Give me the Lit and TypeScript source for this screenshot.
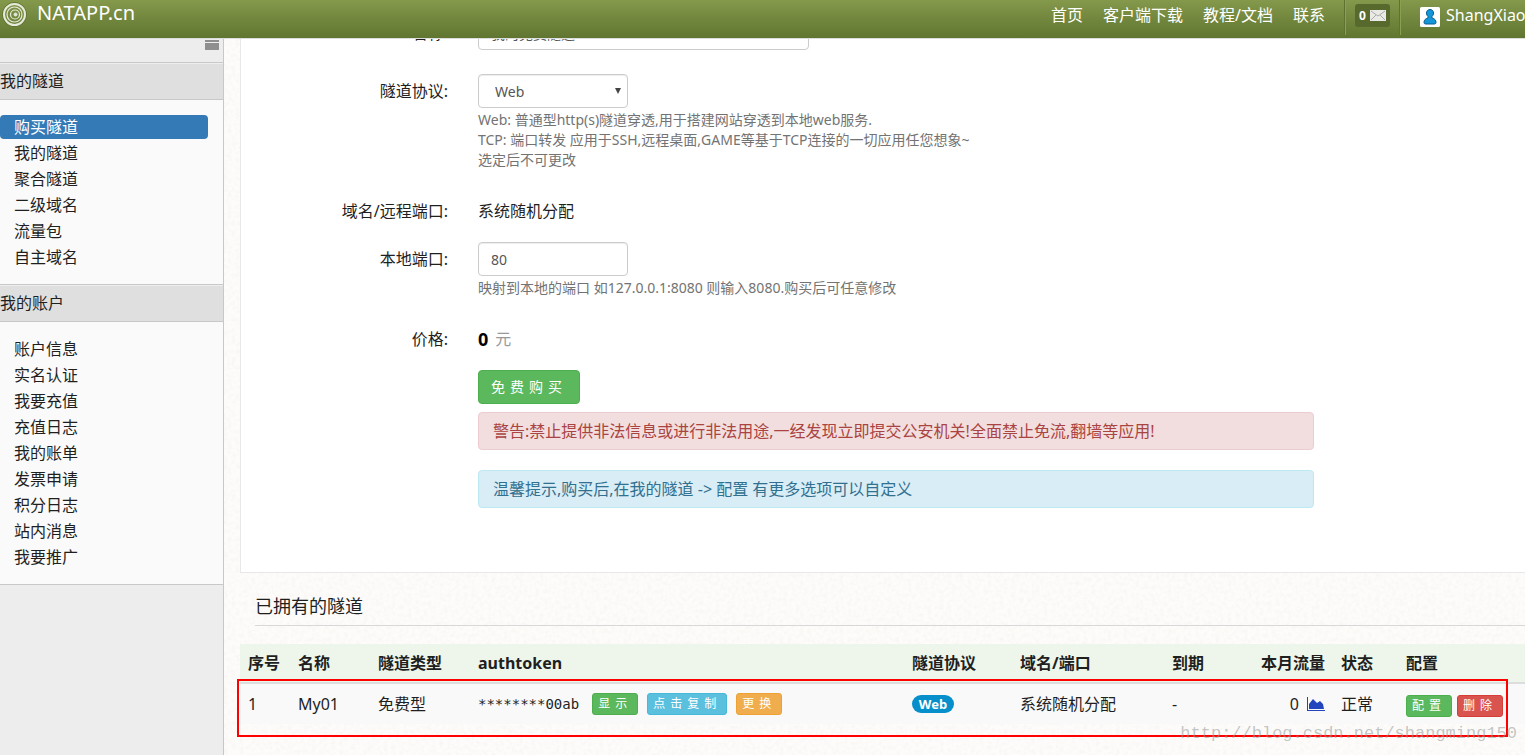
import { LitElement, html, css } from "lit";
import { customElement, state } from "lit/decorators.js";

@customElement("app-root")
export class AppRoot extends LitElement {
  @state() private current = "购买隧道";
  private groups = [
    { title: "我的隧道", items: ["购买隧道", "我的隧道", "聚合隧道", "二级域名", "流量包", "自主域名"] },
    {
      title: "我的账户",
      items: ["账户信息", "实名认证", "我要充值", "充值日志", "我的账单", "发票申请", "积分日志", "站内消息", "我要推广"],
    },
  ];

  static styles = css`
    :host {
      display: flex;
      flex-direction: column;
      height: 100vh;
      overflow: hidden;
      font: 16px/24px "Noto Sans", "Noto Sans CJK SC", sans-serif;
      color: #1f1f1f;
    }
    * { box-sizing: border-box; }
    a { color: inherit; text-decoration: none; }
    ul { list-style: none; margin: 0; padding: 0; }
    input, select, button { font-family: inherit; }

    .topbar {
      flex: none;
      display: flex;
      height: 38px;
      background: linear-gradient(#84994b, #607530);
      color: #fff;
      box-shadow: 0 1px 0 #dedede;
      position: relative;
      z-index: 2;
    }
    .brand { display: flex; gap: 8px; padding: 1px 0 0 1px; font-size: 20px; }
    .brand svg { width: 28px; height: 28px; }
    .nav { display: flex; gap: 20px; margin-left: auto; padding: 3px 20px 0 0; white-space: nowrap; }
    .cell { height: 35px; border-left: 1px solid #8ba04f; box-shadow: -1px 0 0 #5f7231; }
    .mail { width: 55px; padding: 4px 9px; }
    .mail-count {
      display: flex;
      align-items: center;
      gap: 4px;
      width: 35px;
      height: 23px;
      padding: 0 4px;
      border: 0;
      border-radius: 3px;
      background: #58692d;
      color: #fff;
      font-size: 12px;
      font-weight: 700;
    }
    .mail-count svg { flex: none; width: 16px; height: 11px; }
    .account { display: flex; gap: 6px; width: 125px; padding: 3px 0 0 19px; overflow: hidden; white-space: nowrap; }
    .account svg { flex: none; width: 20px; height: 20px; margin-top: 4px; }

    .body { flex: 1; min-height: 0; display: flex; }
    .side { flex: none; width: 224px; background: #ededed; border-right: 1px solid #c8c8c8; }
    .side-top { display: flex; justify-content: flex-end; height: 25px; padding: 2px 4px; border-bottom: 1px solid #c8c8c8; }
    .menu { width: 14px; height: 10px; padding: 0; border: 0; background: linear-gradient(#8f8f8f 2px, #eee 2px, #eee 3px, #8f8f8f 3px); }
    .side h2 {
      margin: 0;
      padding: 6px 0;
      height: 37px;
      border-bottom: 1px solid #c8c8c8;
      background: #dfdfdf;
      box-shadow: inset 0 1px 0 #eee;
      font-size: 16px;
      font-weight: 400;
      line-height: 24px;
    }
    .side ul { padding: 15px 15px 13px 0; background: #fafafa; border-bottom: 1px solid #c8c8c8; }
    .side li a { display: block; height: 24px; margin-bottom: 2px; padding-left: 14px; border-radius: 4px; }
    .side li a.on { background: #337ab7; color: #fff; }

    .main { flex: 1; min-width: 0; position: relative; overflow: hidden; background: #fdfcfa; padding-left: 16px; }
    .paper { position: absolute; inset: 0; width: 100%; height: 100%; }
    .card {
      position: relative;
      margin-top: -38px;
      padding: 16px 211px 40px 0;
      background: #fff;
      border: 1px solid #e8e8e8;
      border-width: 0 0 1px 1px;
    }
    .row { display: grid; grid-template-columns: 207px 1fr; gap: 30px; margin-bottom: 24px; }
    .row > label, .row > .label { text-align: right; padding-top: 5px; }
    .field {
      display: block;
      width: 150px;
      height: 34px;
      padding: 0 12px;
      border: 1px solid #ccc;
      border-radius: 4px;
      background: #fff;
      box-shadow: inset 0 1px 1px rgba(0, 0, 0, 0.075);
      color: #555;
      font-size: 14px;
    }
    .wide { width: 331px; }
    .select { position: relative; width: 150px; }
    select.field { appearance: none; padding-left: 16px; }
    .select svg { position: absolute; right: 7px; top: 14px; width: 6px; height: 6px; pointer-events: none; }
    .help { margin: 0; padding-top: 2px; color: #737373; font-size: 14px; line-height: 20px; }
    .static { padding-top: 5px; }
    .tight { margin-bottom: 19px; }
    .price { display: flex; gap: 7px; }
    .price b { color: #000; font-size: 18px; }
    .price span { color: #999; }
    .btn {
      height: 22px;
      padding: 0 5px;
      border: 1px solid #4cae4c;
      border-radius: 3px;
      background: #5cb85c;
      color: #fff;
      font-size: 12px;
      line-height: 18px;
      letter-spacing: 5px;
      white-space: nowrap;
    }
    .buy { display: block; height: 34px; padding: 0 12px; border-radius: 4px; font-size: 14px; margin-bottom: 8px; }
    .info { background: #5bc0de; border-color: #46b8da; }
    .warn { background: #f0ad4e; border-color: #eea236; }
    .danger { background: #d9534f; border-color: #d43f3a; }
    .alert { padding: 6px 14px; border: 1px solid #ebccd1; border-radius: 4px; background: #f2dede; color: #a94442; }
    .alert.note { margin-top: 20px; border-color: #bce8f1; background: #d9edf7; color: #31708f; }

    .owned { position: relative; }
    .owned h3 {
      margin: 20px 0 18px 15px;
      padding-bottom: 6px;
      border-bottom: 1px solid #d8d8d8;
      font-size: 18px;
      font-weight: 400;
      line-height: 26px;
    }
    .list { position: relative; }
    table { width: 100%; table-layout: fixed; border-collapse: collapse; }
    th { height: 39px; padding: 0 8px; text-align: left; background: #eef6eb; border-bottom: 2px solid #ddd; white-space: nowrap; }
    td { height: 41px; padding: 0 8px; background: #f9f9f9; white-space: nowrap; }
    .c50 { width: 50px; }
    .c65 { width: 65px; }
    .c80 { width: 80px; }
    .c89 { width: 89px; }
    .c100 { width: 100px; }
    .c108 { width: 108px; }
    .c127 { width: 127px; }
    .c152 { width: 152px; }
    .num { text-align: right; }
    .num svg { width: 18px; height: 14px; margin-left: 4px; vertical-align: -1px; }
    .line { display: flex; align-items: center; gap: 9px; }
    .ops { gap: 5px; padding-top: 4px; }
    code { margin-right: 4px; font: 14px/24px "DejaVu Sans Mono", "Liberation Mono", monospace; }
    .badge { display: block; width: 42px; height: 18px; border-radius: 9px; background: #068fca; color: #fff; font-size: 13px; font-weight: 700; line-height: 18px; text-align: center; }
    .frame { position: absolute; left: -3px; right: 17px; top: 35px; height: 58px; border: 2px solid #f00; pointer-events: none; }
    .mark { position: absolute; right: 8px; top: 79px; color: rgba(150, 150, 150, 0.55); font: 17px/22px "Liberation Mono", monospace; }
  `;

  render() {
    return html`
      <header class="topbar">
        <a class="brand" href="#">
          <svg viewBox="0 0 28 28" fill="none" stroke="#e6eadb">
            <circle cx="13.500" cy="13.500" r="12" stroke="#5f7231" stroke-width="1" />
            <circle cx="13.500" cy="13.500" r="10.500" stroke-width="2" />
            <circle cx="13.500" cy="13.500" r="7.500" stroke-width="1.200" />
            <circle cx="14" cy="13.500" r="4.500" stroke-width="1.200" />
            <circle cx="14.500" cy="13.500" r="1.500" fill="#e6eadb" />
          </svg>
          <span>NATAPP.cn</span>
        </a>
        <nav class="nav">
          ${["首页", "客户端下载", "教程/文档", "联系"].map((t) => html`<a href="#">${t}</a>`)}
        </nav>
        <div class="cell mail">
          <button class="mail-count" aria-label="站内消息">
            0
            <svg viewBox="0 0 16 11"><path fill="#e9e9e6" d="M0 0h16v11H0z" /><path fill="none" stroke="#aaa" d="M1 1l7 5 7-5M1 10l5-5M15 10l-5-5" /></svg>
          </button>
        </div>
        <a class="cell account" href="#">
          <svg viewBox="0 0 20 20">
            <rect width="20" height="20" rx="1.500" fill="#fff" />
            <path fill="#1296d8" stroke="#0d5c8c" d="M10 2.500c-2.300 0-3.500 1.600-3.500 3.500 0 1.500.6 2.700 1.500 3.500v1.500c-2.500.6-4 2-4 4.500 0 1 .8 1.500 1.500 1.500h9c.7 0 1.500-.5 1.500-1.500 0-2.500-1.500-3.900-4-4.500V9.500c.9-.8 1.500-2 1.500-3.500 0-1.900-1.200-3.500-3.500-3.500z" />
          </svg>
          <span>ShangXiao</span>
        </a>
      </header>
      <div class="body">
        <aside class="side">
          <div class="side-top"><button class="menu" aria-label="菜单"></button></div>
          ${this.groups.map(
            (g, n) => html`<h2>${g.title}</h2>
              <ul>
                ${g.items.map(
                  (t) => html`<li>
                    <a href="#" class=${n === 0 && t === this.current ? "on" : ""} @click=${() => (this.current = t)}>${t}</a>
                  </li>`
                )}
              </ul>`
          )}
        </aside>
        <main class="main">
          <svg class="paper" aria-hidden="true">
            <filter id="grain" x="0" y="0" width="100%" height="100%">
              <feTurbulence type="fractalNoise" baseFrequency="0.25" numOctaves="4" seed="4" />
              <feColorMatrix values="0 0 0 0 .5  0 0 0 0 .48  0 0 0 0 .42  .18 0 0 0 -.07" />
            </filter>
            <rect width="100%" height="100%" filter="url(#grain)" />
          </svg>
          <form class="card" @submit=${(e: Event) => e.preventDefault()}>
            <div class="row">
              <label for="name">名称:</label>
              <input id="name" class="field wide" value="我的免费隧道" />
            </div>
            <div class="row">
              <label for="proto">隧道协议:</label>
              <div>
                <div class="select">
                  <select id="proto" class="field"><option>Web</option><option>TCP</option></select>
                  <svg viewBox="0 0 7 7"><path d="M0 0h7L3.500 7z" fill="#444" /></svg>
                </div>
                <p class="help">
                  Web: 普通型http(s)隧道穿透,用于搭建网站穿透到本地web服务.<br />
                  TCP: 端口转发 应用于SSH,远程桌面,GAME等基于TCP连接的一切应用任您想象~<br />
                  选定后不可更改
                </p>
              </div>
            </div>
            <div class="row tight">
              <span class="label">域名/远程端口:</span>
              <div class="static">系统随机分配</div>
            </div>
            <div class="row">
              <label for="port">本地端口:</label>
              <div>
                <input id="port" class="field" value="80" />
                <p class="help">映射到本地的端口 如127.0.0.1:8080 则输入8080.购买后可任意修改</p>
              </div>
            </div>
            <div class="row tight">
              <span class="label">价格:</span>
              <div class="static price"><b>0</b><span>元</span></div>
            </div>
            <div class="row">
              <span></span>
              <div>
                <button class="btn buy">免费购买</button>
                <div class="alert">警告:禁止提供非法信息或进行非法用途,一经发现立即提交公安机关!全面禁止免流,翻墙等应用!</div>
                <div class="alert note">温馨提示,购买后,在我的隧道 -&gt; 配置 有更多选项可以自定义</div>
              </div>
            </div>
          </form>
          <section class="owned">
            <h3>已拥有的隧道</h3>
            <div class="list">
              <table>
                <thead>
                  <tr>
                    <th class="c50">序号</th>
                    <th class="c80">名称</th>
                    <th class="c100">隧道类型</th>
                    <th>authtoken</th>
                    <th class="c108">隧道协议</th>
                    <th class="c152">域名/端口</th>
                    <th class="c89">到期</th>
                    <th class="c80 num">本月流量</th>
                    <th class="c65">状态</th>
                    <th class="c127">配置</th>
                  </tr>
                </thead>
                <tbody>
                  <tr>
                    <td>1</td>
                    <td>My01</td>
                    <td>免费型</td>
                    <td>
                      <div class="line">
                        <code>********00ab</code>
                        <button class="btn">显示</button>
                        <button class="btn info">点击复制</button>
                        <button class="btn warn">更换</button>
                      </div>
                    </td>
                    <td><span class="badge">Web</span></td>
                    <td>系统随机分配</td>
                    <td>-</td>
                    <td class="num">
                      0
                      <svg viewBox="0 0 18 14"><path fill="#2244bd" d="M0 0h1v13h17v1H0zM2 12V7l4-5 4 4 3-2 3 3 1 5z" /></svg>
                    </td>
                    <td>正常</td>
                    <td>
                      <div class="line ops"><button class="btn">配置</button><button class="btn danger">删除</button></div>
                    </td>
                  </tr>
                </tbody>
              </table>
              <div class="frame"></div>
              <div class="mark">http://blog.csdn.net/shangming150</div>
            </div>
          </section>
        </main>
      </div>
    `;
  }
}
